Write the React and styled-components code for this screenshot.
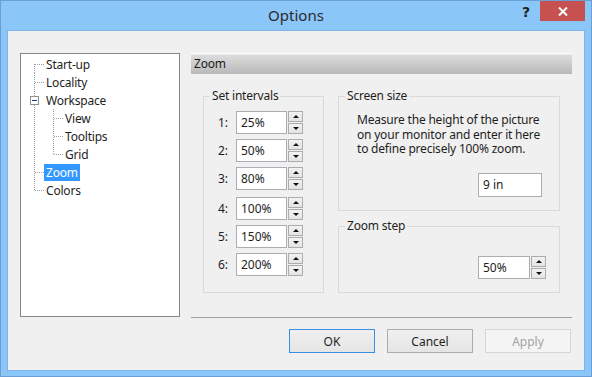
import styled, { createGlobalStyle } from "styled-components";

const GlobalStyle = createGlobalStyle`
  html, body {
    margin: 0;
    padding: 0;
    background: #ffffff;
  }
  body {
    font-family: "Noto Sans", "Open Sans", sans-serif;
    font-size: 12px;
    letter-spacing: -0.2px;
    color: #1e1e1e;
  }
`;

const Window = styled.div`
  width: 592px;
  height: 377px;
  box-sizing: border-box;
  border: 1px solid #6a9ed4;
  background: #8bc6f9;
  padding: 0 6px 5px;
  display: flex;
  flex-direction: column;
`;

const TitleBar = styled.div`
  height: 29px;
  display: grid;
  grid-template-columns: 1fr auto 1fr;
  align-items: start;
`;

const Title = styled.div`
  grid-column: 2;
  font-size: 15px;
  letter-spacing: 0;
  line-height: 29px;
  color: #2b2b2b;
`;

const Controls = styled.div`
  justify-self: end;
  display: flex;
  align-items: flex-start;
`;

const Help = styled.span`
  font-family: "DejaVu Sans", sans-serif;
  font-weight: bold;
  font-size: 14px;
  line-height: 22px;
  color: #222;
  margin-right: 10px;
`;

const Close = styled.div`
  width: 45px;
  height: 20px;
  background: #c75050;
  display: flex;
  align-items: center;
  justify-content: center;
`;

const Client = styled.div`
  flex: 1;
  border: 1px solid #7eb4ea;
  background: #f0f0f0;
  display: flex;
  align-items: flex-start;
  padding: 22px 0 0 12px;
  gap: 11px;
`;

const Tree = styled.div`
  width: 160px;
  height: 264px;
  box-sizing: border-box;
  border: 1px solid #828790;
  background: #ffffff;
  padding-top: 1px;
`;

const TreeRow = styled.div`
  height: 18px;
  display: flex;
  align-items: stretch;
`;

const dotV = (x, top, h) =>
  `repeating-linear-gradient(to bottom, #a0a0a0 0 1px, transparent 1px 2px) ${x}px ${top}px / 1px ${h}px no-repeat`;
const dotH = (x, y, w) =>
  `repeating-linear-gradient(to right, #a0a0a0 0 1px, transparent 1px 2px) ${x}px ${y}px / ${w}px 1px no-repeat`;

const lineFor = (x, kind) => {
  if (kind === "first") return dotV(x, 9, 9);
  if (kind === "last") return dotV(x, 0, 10);
  return dotV(x, 0, 18);
};

const Gutter = styled.span`
  flex-shrink: 0;
  width: ${(p) => p.$width}px;
  display: flex;
  align-items: center;
  background: ${(p) =>
    [p.$branch ? dotH(p.$x + 1, 9, 9) : null, lineFor(p.$x, p.$kind)]
      .filter(Boolean)
      .join(", ")};
`;

const Expander = styled.span`
  margin-left: 9px;
  width: 9px;
  height: 9px;
  box-sizing: border-box;
  border: 1px solid #919191;
  background: #ffffff;
  display: flex;
  align-items: center;
  justify-content: center;

  &::after {
    content: "";
    width: 5px;
    height: 1px;
    background: #1c3f94;
  }
`;

const TreeLabel = styled.span`
  align-self: center;
  height: 17px;
  line-height: 17px;
  padding: 0 2px;
  background: ${(p) => (p.$selected ? "#3399ff" : "transparent")};
  color: ${(p) => (p.$selected ? "#ffffff" : "#1e1e1e")};
`;

const RightPane = styled.div`
  width: 381px;
  display: flex;
  flex-direction: column;
`;

const Header = styled.div`
  height: 21px;
  line-height: 21px;
  padding-left: 3px;
  background: linear-gradient(
    #fafafa 0,
    #fafafa 1px,
    #dcdcdc 2px,
    #b9b9b9 100%
  );
  color: #1a1a1a;
`;

const Groups = styled.div`
  margin-top: 14px;
  padding-left: 12px;
  display: flex;
  gap: 14px;
`;

const Stack = styled.div`
  width: 222px;
  display: flex;
  flex-direction: column;
  gap: 7px;
`;

const Group = styled.fieldset`
  margin: 0;
  padding: 0;
  min-width: 0;
  box-sizing: border-box;
  width: ${(p) => p.$width}px;
  height: ${(p) => p.$height}px;
  border: 1px solid #dadada;
`;

const Legend = styled.legend`
  margin-left: 6px;
  padding: 0 2px;
  line-height: 16px;
  font-size: 12px;
`;

const GroupBody = styled.div`
  padding: ${(p) => p.$pad};
  display: flex;
  flex-direction: column;
  align-items: ${(p) => p.$align || "stretch"};
`;

const IntervalRow = styled.div`
  display: flex;
  align-items: center;
  height: 23px;
  margin-top: ${(p) => p.$gap}px;
`;

const IntervalLabel = styled.span`
  width: 18px;
`;

const TextBox = styled.input`
  width: ${(p) => p.$width}px;
  height: ${(p) => p.$height || 23}px;
  box-sizing: border-box;
  border: 1px solid #abadb3;
  background: #ffffff;
  padding: 0 0 0 4px;
  margin: 0;
  font: inherit;
  color: #1e1e1e;
  outline: none;
`;

const Spinner = styled.div`
  margin-left: 1px;
  display: flex;
  flex-direction: column;
  gap: 1px;
`;

const SpinButton = styled.div`
  width: 15px;
  height: 11px;
  box-sizing: border-box;
  border: 1px solid #acacac;
  background: linear-gradient(#f2f2f2, #e4e4e4);
  display: flex;
  align-items: center;
  justify-content: center;

  &::after {
    content: "";
    width: 0;
    height: 0;
    border-left: 3px solid transparent;
    border-right: 3px solid transparent;
    ${(p) =>
      p.$down
        ? "border-top: 3px solid #111;"
        : "border-bottom: 3px solid #111;"}
  }
`;

const Note = styled.div`
  display: flex;
  flex-direction: column;
`;

const NoteLine = styled.span`
  height: 14.5px;
  line-height: 14.5px;
  white-space: nowrap;
  color: #1e1e1e;
`;

const Field = styled.div`
  display: flex;
  align-self: ${(p) => p.$self || "auto"};
  margin-top: ${(p) => p.$top}px;
`;

const Separator = styled.div`
  margin-top: 24px;
  height: 1px;
  background: #a0a0a0;
`;

const ButtonRow = styled.div`
  margin-top: 11px;
  padding-right: 1px;
  display: flex;
  justify-content: flex-end;
  gap: 12px;
`;

const Button = styled.button`
  width: 86px;
  height: 24px;
  box-sizing: border-box;
  margin: 0;
  padding: 0;
  font: inherit;
  border: 1px solid
    ${(p) => (p.$primary ? "#3c8fe6" : p.disabled ? "#d6d6d6" : "#adadad")};
  background: ${(p) =>
    p.disabled ? "#f4f4f4" : "linear-gradient(#f0f0f0, #e5e5e5)"};
  color: ${(p) => (p.disabled ? "#a3a3a3" : "#1e1e1e")};
`;

const treeItems = [
  { label: "Start-up", level: 0, kind: "first" },
  { label: "Locality", level: 0 },
  { label: "Workspace", level: 0, expander: true },
  { label: "View", level: 1 },
  { label: "Tooltips", level: 1 },
  { label: "Grid", level: 1, childKind: "last" },
  { label: "Zoom", level: 0, selected: true },
  { label: "Colors", level: 0, kind: "last" },
];

const intervals = [
  { n: 1, value: "25%", gap: 0 },
  { n: 2, value: "50%", gap: 5 },
  { n: 3, value: "80%", gap: 5 },
  { n: 4, value: "100%", gap: 7 },
  { n: 5, value: "150%", gap: 5 },
  { n: 6, value: "200%", gap: 5 },
];

const noteLines = [
  "Measure the height of the picture",
  "on your monitor and enter it here",
  "to define precisely 100% zoom.",
];

const Spin = () => (
  <Spinner>
    <SpinButton />
    <SpinButton $down />
  </Spinner>
);

const App = () => (
  <>
    <GlobalStyle />
    <Window>
      <TitleBar>
        <Title>Options</Title>
        <Controls>
          <Help>?</Help>
          <Close>
            <svg width="10" height="9" viewBox="0 0 10 9">
              <path d="M1 0.5 L9 8.5 M9 0.5 L1 8.5" stroke="#fff" strokeWidth="2" />
            </svg>
          </Close>
        </Controls>
      </TitleBar>
      <Client>
        <Tree>
          {treeItems.map((item) => (
            <TreeRow key={item.label}>
              {item.level === 0 ? (
                <Gutter $width={23} $x={13} $kind={item.kind} $branch={!item.expander}>
                  {item.expander && <Expander />}
                </Gutter>
              ) : (
                <>
                  <Gutter $width={23} $x={13} />
                  <Gutter $width={19} $x={9} $kind={item.childKind} $branch />
                </>
              )}
              <TreeLabel $selected={item.selected}>{item.label}</TreeLabel>
            </TreeRow>
          ))}
        </Tree>
        <RightPane>
          <Header>Zoom</Header>
          <Groups>
            <Group $width={121} $height={205}>
              <Legend>Set intervals</Legend>
              <GroupBody $pad="7px 0 0 14px">
                {intervals.map((row) => (
                  <IntervalRow key={row.n} $gap={row.gap}>
                    <IntervalLabel>{row.n}:</IntervalLabel>
                    <TextBox $width={51} readOnly value={row.value} />
                    <Spin />
                  </IntervalRow>
                ))}
              </GroupBody>
            </Group>
            <Stack>
              <Group $width={222} $height={123}>
                <Legend>Screen size</Legend>
                <GroupBody $pad="9px 17px 0 18px" $align="flex-start">
                  <Note>
                    {noteLines.map((line) => (
                      <NoteLine key={line}>{line}</NoteLine>
                    ))}
                  </Note>
                  <Field $top={16} $self="flex-end">
                    <TextBox $width={64} $height={24} readOnly value="9 in" />
                  </Field>
                </GroupBody>
              </Group>
              <Group $width={222} $height={75}>
                <Legend>Zoom step</Legend>
                <GroupBody $pad="22px 13px 0 0" $align="flex-end">
                  <Field $top={0}>
                    <TextBox $width={52} readOnly value="50%" />
                    <Spin />
                  </Field>
                </GroupBody>
              </Group>
            </Stack>
          </Groups>
          <Separator />
          <ButtonRow>
            <Button $primary>OK</Button>
            <Button>Cancel</Button>
            <Button disabled>Apply</Button>
          </ButtonRow>
        </RightPane>
      </Client>
    </Window>
  </>
);

export default App;
